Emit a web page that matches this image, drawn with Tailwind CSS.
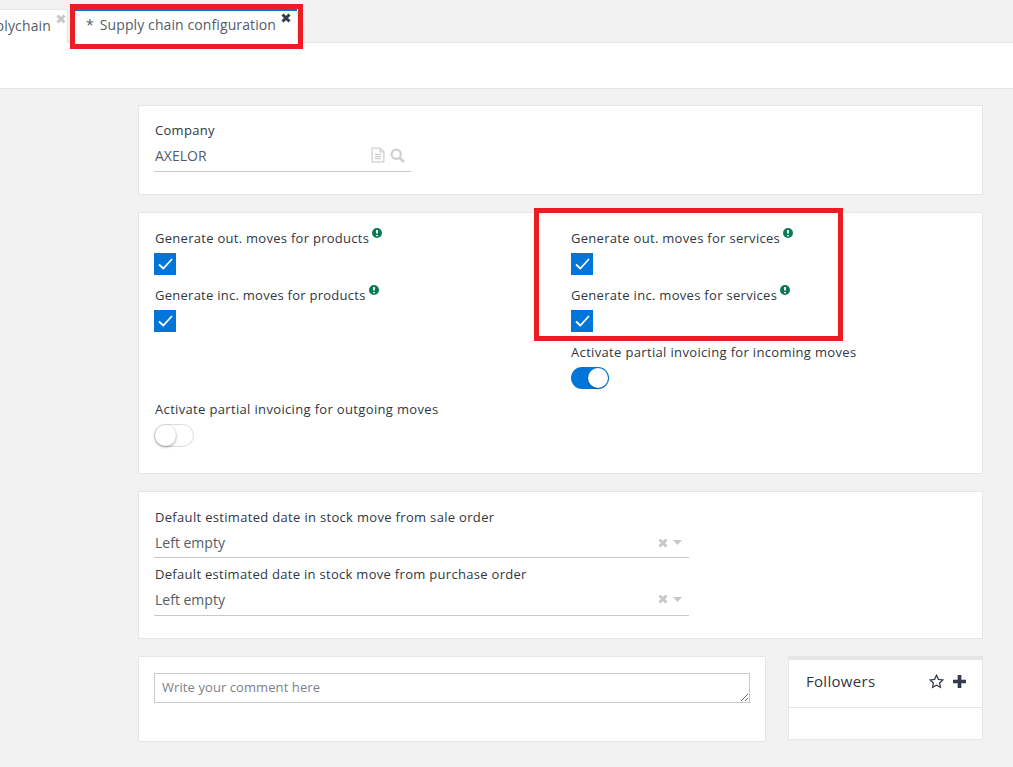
<!DOCTYPE html>
<html lang="en">
<head>
  <meta charset="UTF-8" />
  <title>Supply chain configuration</title>
  <script src="https://cdn.jsdelivr.net/npm/@tailwindcss/browser@4"></script>
</head>
<body class="bg-[#f2f2f2] text-[#2f3744] font-['Open_Sans',sans-serif] text-[13px] h-[767px] overflow-hidden relative">

  <!-- tabs -->
  <div class="h-[43px] flex items-end border-b border-[#e6e6e6] pl-0">
    <div class="w-[68px] h-[34px] flex justify-end overflow-hidden bg-white border-t border-r border-[#e6e6e6] shrink-0 mb-[-1px]">
      <div class="flex items-start shrink-0">
        <span class="text-[14px] mt-[5px] tracking-[0.15px] text-[#555c68] whitespace-nowrap">Supplychain</span>
        <svg class="w-[10px] h-[10px] mt-[4px] ml-[5px] mr-[1px]" viewBox="0 0 10 10"><path d="M1.500 1.500l7 7M8.500 1.500l-7 7" stroke="#c8c8c8" stroke-width="3"/></svg>
      </div>
    </div>
    <div class="ml-[7px] w-[222px] h-[34px] flex items-start bg-white border-t-2 border-[#0275d8] shrink-0 mb-[-1px]">
      <span class="text-[14px] mt-[3px] ml-[11px] tracking-[0.1px] text-[#555c68] whitespace-nowrap">*</span>
      <span class="text-[14px] mt-[3px] ml-[6px] tracking-[0.1px] text-[#555c68] whitespace-nowrap">Supply chain configuration</span>
      <svg class="w-[10px] h-[10px] mt-[2px] ml-[5px]" viewBox="0 0 10 10"><path d="M1.500 1.500l7 7M8.500 1.500l-7 7" stroke="#333c4a" stroke-width="3"/></svg>
    </div>
  </div>
  <!-- toolbar -->
  <div class="h-[46px] bg-white border-b border-[#e6e6e6]"></div>

  <div class="ml-[138px] w-[845px] mt-[16px] flex flex-col gap-[17px]">
    <!-- company -->
    <section class="h-[90px] bg-white border border-[#e6e6e6] px-[15px] pt-[15px]">
      <div class="w-[257px]">
        <div class="h-[18px] leading-[18px] font-medium tracking-[0.3px] pl-px">Company</div>
        <div class="h-[33px] border-b border-[#c8c8c8] flex items-center justify-between">
          <span class="text-[14px] text-[#555c68] pl-[1px]">AXELOR</span>
          <span class="flex items-center gap-[5px] pr-[6px]">
            <svg class="w-[14px] h-[16px] ml-px" viewBox="0 0 13 15" fill="none" stroke="#cfcfcf" stroke-width="1.200"><path d="M1 1h7.500L12 4.500V14H1z"/><path d="M8.500 1v3.500H12M3.500 7h6M3.500 9h6M3.500 11h6"/></svg>
            <svg class="w-[15px] h-[15px]" viewBox="0 0 14 14" fill="none" stroke="#cfcfcf"><circle cx="5.800" cy="5.800" r="4.300" stroke-width="2"/><path d="M9 9l4 4" stroke-width="2.600"/></svg>
          </span>
        </div>
      </div>
    </section>

    <!-- checkboxes and toggles -->
    <section class="h-[262px] bg-white border border-[#e6e6e6] pl-[15px] pt-[16px] grid grid-cols-[417px_1fr] auto-rows-[57px]">
      <div>
        <div class="h-[18px] leading-[18px] font-medium tracking-[0.28px] pl-px flex">Generate out. moves for products
          <svg class="w-[10px] h-[10px] ml-[3px] mt-[-1px]" viewBox="0 0 10 10"><circle cx="5" cy="5" r="5" fill="#0b7a53"/><path d="M5 2v3.500M5 7v1.200" stroke="#fff" stroke-width="1.800"/></svg>
        </div>
        <div class="w-[22px] h-[22px] mt-[6px] bg-[#0275d8] flex items-center justify-center">
          <svg class="w-[15px] h-[12px]" viewBox="0 0 14 12" fill="none" stroke="#fff" stroke-width="1.800"><path d="M0.500 6.500l4.300 4 8.700-9.500"/></svg>
        </div>
      </div>
      <div>
        <div class="h-[18px] leading-[18px] font-medium tracking-[0.3px] flex">Generate out. moves for services
          <svg class="w-[10px] h-[10px] ml-[3px] mt-[-1px]" viewBox="0 0 10 10"><circle cx="5" cy="5" r="5" fill="#0b7a53"/><path d="M5 2v3.500M5 7v1.200" stroke="#fff" stroke-width="1.800"/></svg>
        </div>
        <div class="w-[22px] h-[22px] mt-[6px] bg-[#0275d8] flex items-center justify-center">
          <svg class="w-[15px] h-[12px]" viewBox="0 0 14 12" fill="none" stroke="#fff" stroke-width="1.800"><path d="M0.500 6.500l4.300 4 8.700-9.500"/></svg>
        </div>
      </div>
      <div>
        <div class="h-[18px] leading-[18px] font-medium tracking-[0.26px] pl-px flex">Generate inc. moves for products
          <svg class="w-[10px] h-[10px] ml-[3px] mt-[-1px]" viewBox="0 0 10 10"><circle cx="5" cy="5" r="5" fill="#0b7a53"/><path d="M5 2v3.500M5 7v1.200" stroke="#fff" stroke-width="1.800"/></svg>
        </div>
        <div class="w-[22px] h-[22px] mt-[6px] bg-[#0275d8] flex items-center justify-center">
          <svg class="w-[15px] h-[12px]" viewBox="0 0 14 12" fill="none" stroke="#fff" stroke-width="1.800"><path d="M0.500 6.500l4.300 4 8.700-9.500"/></svg>
        </div>
      </div>
      <div>
        <div class="h-[18px] leading-[18px] font-medium tracking-[0.3px] flex">Generate inc. moves for services
          <svg class="w-[10px] h-[10px] ml-[3px] mt-[-1px]" viewBox="0 0 10 10"><circle cx="5" cy="5" r="5" fill="#0b7a53"/><path d="M5 2v3.500M5 7v1.200" stroke="#fff" stroke-width="1.800"/></svg>
        </div>
        <div class="w-[22px] h-[22px] mt-[6px] bg-[#0275d8] flex items-center justify-center">
          <svg class="w-[15px] h-[12px]" viewBox="0 0 14 12" fill="none" stroke="#fff" stroke-width="1.800"><path d="M0.500 6.500l4.300 4 8.700-9.500"/></svg>
        </div>
      </div>
      <div></div>
      <div>
        <div class="h-[18px] leading-[18px] font-medium tracking-[0.34px]">Activate partial invoicing for incoming moves</div>
        <div class="w-[38px] h-[22px] mt-[6px] rounded-full bg-[#0275d8] flex items-center justify-end pr-px">
          <div class="w-[20px] h-[20px] rounded-full bg-white shadow-[0_1px_2px_rgba(0,0,0,.3)]"></div>
        </div>
      </div>
      <div class="col-start-1">
        <div class="h-[18px] leading-[18px] font-medium tracking-[0.34px] pl-px">Activate partial invoicing for outgoing moves</div>
        <div class="w-[40px] h-[23px] mt-[6px] rounded-full bg-white border border-[#dcdcdc] flex items-center">
          <div class="w-[21px] h-[21px] rounded-full bg-white shadow-[0_1px_3px_rgba(0,0,0,.4)]"></div>
        </div>
      </div>
    </section>

    <!-- estimated dates -->
    <section class="h-[148px] bg-white border border-[#e6e6e6] px-[15px] pt-[16px]">
      <div class="w-[535px] flex flex-col gap-[7px]">
        <div class="h-[50px]">
          <div class="h-[18px] leading-[18px] font-medium tracking-[0.32px] pl-px">Default estimated date in stock move from sale order</div>
          <div class="h-[32px] border-b border-[#c8c8c8] flex items-center justify-between pt-[2px]">
            <span class="text-[14px] text-[#555c68] pl-[1px]">Left empty</span>
            <span class="flex items-center gap-[5px] pr-[7px]">
              <svg class="w-[10px] h-[10px]" viewBox="0 0 10 10"><path d="M1.500 1.500l7 7M8.500 1.500l-7 7" stroke="#c8c8c8" stroke-width="3"/></svg>
              <svg class="w-[9px] h-[5px]" viewBox="0 0 9 5"><path d="M0 0h9L4.500 5z" fill="#c8c8c8"/></svg>
            </span>
          </div>
        </div>
        <div class="h-[50px]">
          <div class="h-[18px] leading-[18px] font-medium tracking-[0.3px] pl-px">Default estimated date in stock move from purchase order</div>
          <div class="h-[33px] border-b border-[#c8c8c8] flex items-center justify-between">
            <span class="text-[14px] text-[#555c68] pl-[1px]">Left empty</span>
            <span class="flex items-center gap-[5px] pr-[7px]">
              <svg class="w-[10px] h-[10px]" viewBox="0 0 10 10"><path d="M1.500 1.500l7 7M8.500 1.500l-7 7" stroke="#c8c8c8" stroke-width="3"/></svg>
              <svg class="w-[9px] h-[5px]" viewBox="0 0 9 5"><path d="M0 0h9L4.500 5z" fill="#c8c8c8"/></svg>
            </span>
          </div>
        </div>
      </div>
    </section>

    <!-- comment and followers -->
    <div class="flex justify-between items-start">
      <section class="w-[628px] h-[86px] bg-white border border-[#e6e6e6] px-[15px] pt-[16px]">
        <textarea class="block w-[596px] h-[30px] border border-[#c8c8c8] px-[7px] py-[4px] text-[13px] tracking-[0.08px] leading-[18px] text-[#555c68] placeholder:text-[#7c818a] outline-none" placeholder="Write your comment here"></textarea>
      </section>
      <section class="w-[195px] h-[84px] bg-white border border-[#e6e6e6] border-t-[4px]">
        <div class="h-[48px] border-b border-[#e6e6e6] flex items-center justify-between pl-[17px] pr-[16px] pb-[4px]">
          <span class="text-[15px] font-medium tracking-[0.3px]">Followers</span>
          <span class="flex items-center gap-[9px]">
            <svg class="w-[15px] h-[15px]" viewBox="0 0 14 14" fill="none" stroke="#333c4a" stroke-width="1.200"><path d="M7 1.200l1.800 3.800 4.100.5-3 2.900.8 4.100L7 10.500 3.300 12.500l.8-4.100-3-2.900 4.100-.5z"/></svg>
            <svg class="w-[13px] h-[13px]" viewBox="0 0 12 12"><path d="M6 0v12M0 6h12" stroke="#333c4a" stroke-width="3.400"/></svg>
          </span>
        </div>
      </section>
    </div>
  </div>

  <!-- red annotation boxes drawn over the screenshot -->
  <div class="absolute left-[70px] top-[4px] w-[233px] h-[45px] border-[5px] border-[#ed1c24]"></div>
  <div class="absolute left-[534px] top-[208px] w-[309px] h-[133px] border-[5px] border-[#ed1c24]"></div>
</body>
</html>
